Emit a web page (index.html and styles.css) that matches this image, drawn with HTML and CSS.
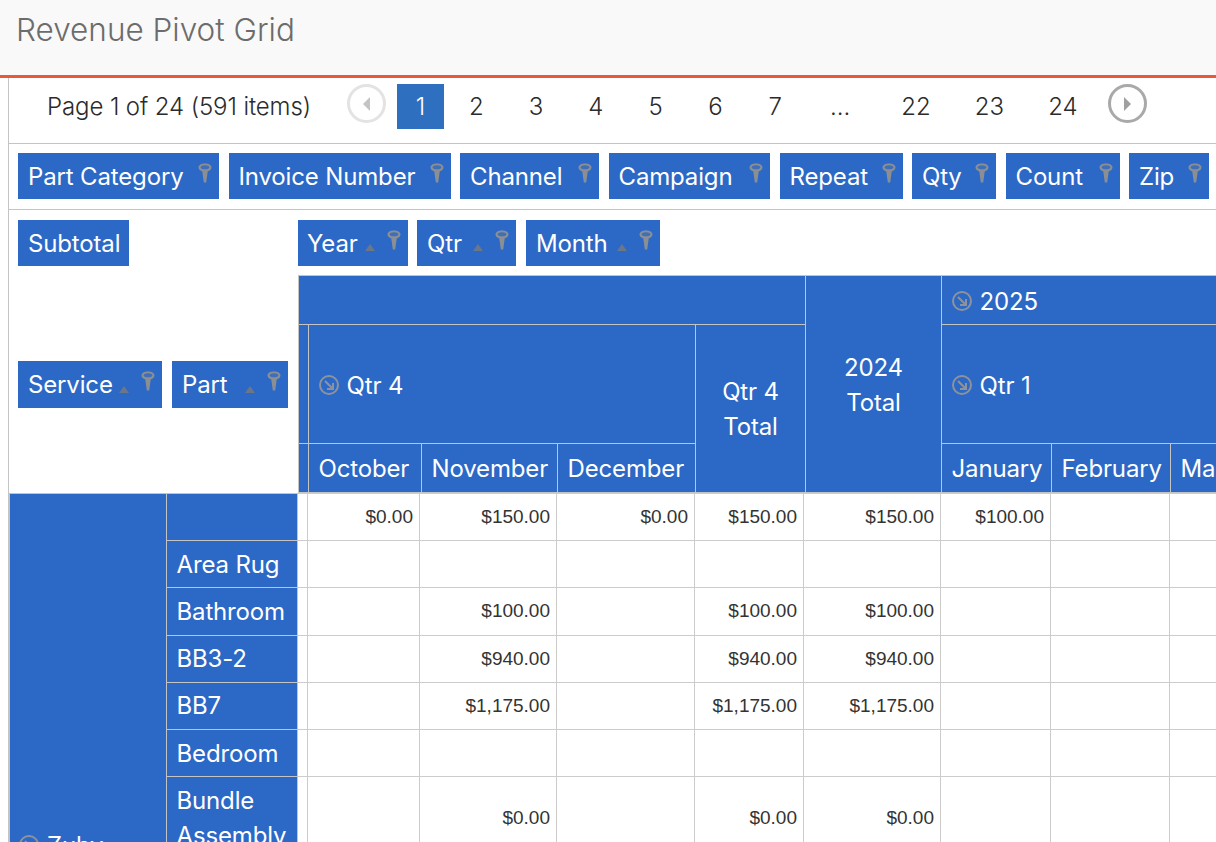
FILE: index.html
```html
<!DOCTYPE html>
<html lang="en">
<head>
    <meta charset="UTF-8">
    <title>Revenue Pivot Grid</title>
    <link rel="stylesheet" href="styles.css">
</head>
<body>
    <svg class="defs" width="0" height="0">
        <symbol id="pin" viewBox="0 0 14 20">
            <path d="M7 .5C3.400.5.500 2 .500 4.500c0 2 1.800 3.300 3.800 3.900L5.800 19.500h2.400l1.500-11.100c2-.6 3.800-1.900 3.800-3.900C13.500 2 10.600.5 7 .5z" fill="#8b8f94"/>
            <ellipse cx="7" cy="4.200" rx="4.200" ry="2" fill="#3f6fb8"/>
        </symbol>
        <symbol id="expand" viewBox="0 0 20 20">
            <circle cx="10" cy="10" r="9" fill="none" stroke="#8d939c" stroke-width="2"/>
            <path d="M6 6l7.500 7.500M14 8v6H8" fill="none" stroke="#8d939c" stroke-width="2"/>
        </symbol>
    </svg>

    <header class="title-bar">Revenue Pivot Grid</header>

    <main class="grid-box">
        <!-- Pager -->
        <div class="pager">
            <span class="pager-summary">Page 1 of 24 (591 items)</span>
            <span class="pager-arrow disabled"><i class="tri-left"></i></span>
            <a class="page current">1</a>
            <a class="page">2</a>
            <a class="page">3</a>
            <a class="page">4</a>
            <a class="page">5</a>
            <a class="page">6</a>
            <a class="page">7</a>
            <span class="page dots">...</span>
            <a class="page wide">22</a>
            <a class="page wide">23</a>
            <a class="page wide">24</a>
            <span class="pager-arrow next"><i class="tri-right"></i></span>
        </div>

        <!-- Filter fields -->
        <div class="filter-row">
            <span class="field w-category">Part Category<svg class="pin"><use href="#pin"/></svg></span>
            <span class="field w-invoice">Invoice Number<svg class="pin"><use href="#pin"/></svg></span>
            <span class="field w-channel">Channel<svg class="pin"><use href="#pin"/></svg></span>
            <span class="field w-campaign">Campaign<svg class="pin"><use href="#pin"/></svg></span>
            <span class="field w-repeat">Repeat<svg class="pin"><use href="#pin"/></svg></span>
            <span class="field w-qty">Qty<svg class="pin"><use href="#pin"/></svg></span>
            <span class="field w-count">Count<svg class="pin"><use href="#pin"/></svg></span>
            <span class="field w-zip">Zip<svg class="pin"><use href="#pin"/></svg></span>
        </div>

        <!-- Pivot header -->
        <div class="pivot-head">
            <div class="data-fields">
                <span class="field w-subtotal">Subtotal</span>
            </div>
            <div class="col-fields">
                <span class="field w-year">Year<i class="sort"></i><svg class="pin"><use href="#pin"/></svg></span>
                <span class="field w-qtr">Qtr<i class="sort"></i><svg class="pin"><use href="#pin"/></svg></span>
                <span class="field w-month">Month<i class="sort"></i><svg class="pin"><use href="#pin"/></svg></span>
            </div>
            <div class="row-fields">
                <span class="field w-service">Service<i class="sort"></i><svg class="pin"><use href="#pin"/></svg></span>
                <span class="field w-part">Part<i class="sort"></i><svg class="pin"><use href="#pin"/></svg></span>
            </div>
            <table class="col-headers">
                <colgroup>
                    <col class="c0"><col class="c1"><col class="c2"><col class="c3"><col class="c4"><col class="c5"><col class="c6"><col class="c7"><col class="c8">
                </colgroup>
                <tr class="h1">
                    <th colspan="5"></th>
                    <th rowspan="3" class="center shift">2024<br>Total</th>
                    <th colspan="3" class="shift"><svg class="expand"><use href="#expand"/></svg>2025</th>
                </tr>
                <tr class="h2">
                    <th></th>
                    <th colspan="3" class="shift"><svg class="expand"><use href="#expand"/></svg>Qtr 4</th>
                    <th rowspan="2" class="center">Qtr 4<br>Total</th>
                    <th colspan="3" class="shift"><svg class="expand"><use href="#expand"/></svg>Qtr 1</th>
                </tr>
                <tr class="h3">
                    <th></th>
                    <th>October</th>
                    <th>November</th>
                    <th>December</th>
                    <th>January</th>
                    <th>February</th>
                    <th>March</th>
                </tr>
            </table>
        </div>

        <!-- Pivot body -->
        <table class="pivot-body">
            <colgroup>
                <col class="r1"><col class="r2"><col class="d0"><col class="d1"><col class="d2"><col class="d3"><col class="d4"><col class="d5"><col class="d6"><col class="d7"><col class="d8">
            </colgroup>
            <tr>
                <th rowspan="8" class="service"><svg class="expand"><use href="#expand"/></svg>Zuby</th>
                <th></th>
                <td></td><td>$0.00</td><td>$150.00</td><td>$0.00</td><td>$150.00</td><td>$150.00</td><td>$100.00</td><td></td><td></td>
            </tr>
            <tr>
                <th>Area Rug</th>
                <td></td><td></td><td></td><td></td><td></td><td></td><td></td><td></td><td></td>
            </tr>
            <tr>
                <th>Bathroom</th>
                <td></td><td></td><td>$100.00</td><td></td><td>$100.00</td><td>$100.00</td><td></td><td></td><td></td>
            </tr>
            <tr>
                <th>BB3-2</th>
                <td></td><td></td><td>$940.00</td><td></td><td>$940.00</td><td>$940.00</td><td></td><td></td><td></td>
            </tr>
            <tr>
                <th>BB7</th>
                <td></td><td></td><td>$1,175.00</td><td></td><td>$1,175.00</td><td>$1,175.00</td><td></td><td></td><td></td>
            </tr>
            <tr>
                <th>Bedroom</th>
                <td></td><td></td><td></td><td></td><td></td><td></td><td></td><td></td><td></td>
            </tr>
            <tr class="tall">
                <th>Bundle Assembly</th>
                <td></td><td></td><td>$0.00</td><td></td><td>$0.00</td><td>$0.00</td><td></td><td></td><td></td>
            </tr>
            <tr>
                <th></th>
                <td></td><td></td><td></td><td></td><td></td><td></td><td></td><td></td><td></td>
            </tr>
        </table>
    </main>
</body>
</html>
```

FILE: styles.css
```css
/* General */
html, body {
    margin: 0;
    height: 842px;
    overflow: hidden;
    background: #fff;
}

body {
    font-family: Inter, "Liberation Sans", sans-serif;
    font-weight: 300;
    color: #2b2b2b;
}

.defs {
    position: absolute;
}

/* Title bar */
.title-bar {
    height: 75px;
    padding: 0 16px;
    background: #f9f9f9;
    border-bottom: 3px solid #e8583a;
    color: #6c6c6c;
    font-size: 31.500px;
    line-height: 60px;
}

.grid-box {
    margin-left: 8px;
    border-left: 1px solid #c4c4c4;
    width: 1300px;
}

/* Pager */
.pager {
    height: 59px;
    padding: 6px 0 0 38px;
    border-bottom: 1px solid #c4c4c4;
    display: flex;
    align-items: flex-start;
    font-size: 24px;
}

.pager-summary {
    width: 300px;
    line-height: 45px;
    letter-spacing: -0.1px;
}

.pager-arrow {
    width: 39px;
    height: 39px;
    box-sizing: border-box;
    border: 3px solid #a9a9a9;
    border-radius: 50%;
    display: flex;
    align-items: center;
    justify-content: center;
    margin-right: 11px;
}

.pager-arrow.disabled {
    border-color: #e3e3e3;
}

.pager-arrow.next {
    margin: 0 0 0 8.500px;
}

.tri-left, .tri-right {
    border-top: 7px solid transparent;
    border-bottom: 7px solid transparent;
}

.tri-left {
    border-right: 7px solid #c4c4c4;
}

.tri-right {
    border-left: 7px solid #a0a0a0;
}

.page {
    width: 59.800px;
    height: 45px;
    line-height: 45px;
    text-align: center;
}

.page.current {
    width: 47px;
    background: #2f6fc0;
    color: #fff;
    margin-right: 2.400px;
}

.page.dots {
    width: 70px;
    margin-right: 4px;
}

.page.wide {
    width: 73.500px;
}

/* Field chips */
.field {
    display: flex;
    align-items: center;
    position: relative;
    flex: none;
    height: 46px;
    box-sizing: border-box;
    padding-left: 10px;
    background: #2c68c6;
    color: #fff;
    font-size: 24px;
    font-weight: 400;
    letter-spacing: -0.15px;
    white-space: nowrap;
}

.pin {
    position: absolute;
    top: 10px;
    right: 7px;
    width: 14px;
    height: 20px;
}

.sort {
    position: absolute;
    bottom: 15px;
    right: 33px;
    border-left: 5.500px solid transparent;
    border-right: 5.500px solid transparent;
    border-bottom: 7px solid #6b7688;
}

.w-category { width: 201px; }
.w-invoice { width: 222px; }
.w-channel { width: 139px; }
.w-campaign { width: 161.500px; }
.w-repeat { width: 123px; }
.w-qty { width: 84px; }
.w-count { width: 114px; }
.w-zip { width: 80px; }
.w-subtotal { width: 111px; }
.w-year { width: 110px; padding-left: 9px; }
.w-qtr { width: 99px; }
.w-month { width: 134px; margin-left: 1px; }
.w-service { width: 144px; height: 47px; }
.w-part { width: 116px; height: 47px; }

.filter-row {
    height: 56px;
    padding: 9px 0 0 9px;
    border-bottom: 1px solid #c4c4c4;
    display: flex;
    align-items: flex-start;
    gap: 9.500px;
}

/* Pivot header */
.pivot-head {
    display: grid;
    grid-template-columns: 289px 1fr;
    grid-template-rows: 65px 218px;
}

.data-fields {
    padding: 10px 0 0 9px;
}

.col-fields {
    display: flex;
    gap: 9px;
    padding-top: 10px;
}

.row-fields {
    display: flex;
    align-items: center;
    gap: 10px;
    padding-left: 9px;
}

.col-headers, .pivot-body {
    border-collapse: collapse;
    table-layout: fixed;
}

.col-headers {
    width: 972px;
    background: #2c68c6;
    border-top: 1px solid #c4c4c4;
    border-left: 1px solid #c4c4c4;
}

.col-headers th, .pivot-body th {
    background: #2c68c6;
    color: #fff;
    font-weight: 400;
    font-size: 24px;
    letter-spacing: -0.15px;
    text-align: left;
    padding: 0 9.500px;
    border: 1px solid #c4c4c4;
    overflow: hidden;
    line-height: 35px;
}

.col-headers th {
    white-space: nowrap;
}

.col-headers th.center {
    text-align: center;
}

.col-headers th.shift {
    padding-top: 2px;
}

.c0 { width: 10px; }
.c1 { width: 113px; }
.c2 { width: 136px; }
.c3 { width: 138px; }
.c4 { width: 110px; }
.c5 { width: 136px; }
.c6 { width: 110px; }
.c7 { width: 119px; }
.c8 { width: 100px; }

.h1 { height: 49px; }
.h2 { height: 119px; }
.h3 { height: 49px; }

.expand {
    width: 20px;
    height: 20px;
    vertical-align: -1px;
    margin-right: 8px;
}

/* Pivot body */
.pivot-body {
    width: 1250px;
    border-top: 1px solid #c4c4c4;
}

.pivot-body th.service {
    vertical-align: top;
    padding: 334px 0 0 9px;
}

.pivot-body td {
    border: 1px solid #cccccc;
    text-align: right;
    padding: 0 6px 0 0;
    font-family: "Liberation Sans", Arial, sans-serif;
    font-weight: 400;
    font-size: 19px;
    color: #333;
    height: 46.200px;
}

.pivot-body .tall td {
    height: 81px;
}

.r1 { width: 157px; }
.r2 { width: 131px; }
.d0 { width: 10px; }
.d1 { width: 112px; }
.d2 { width: 137px; }
.d3 { width: 138px; }
.d4 { width: 109px; }
.d5 { width: 137px; }
.d6 { width: 110px; }
.d7 { width: 119px; }
.d8 { width: 100px; }
```
